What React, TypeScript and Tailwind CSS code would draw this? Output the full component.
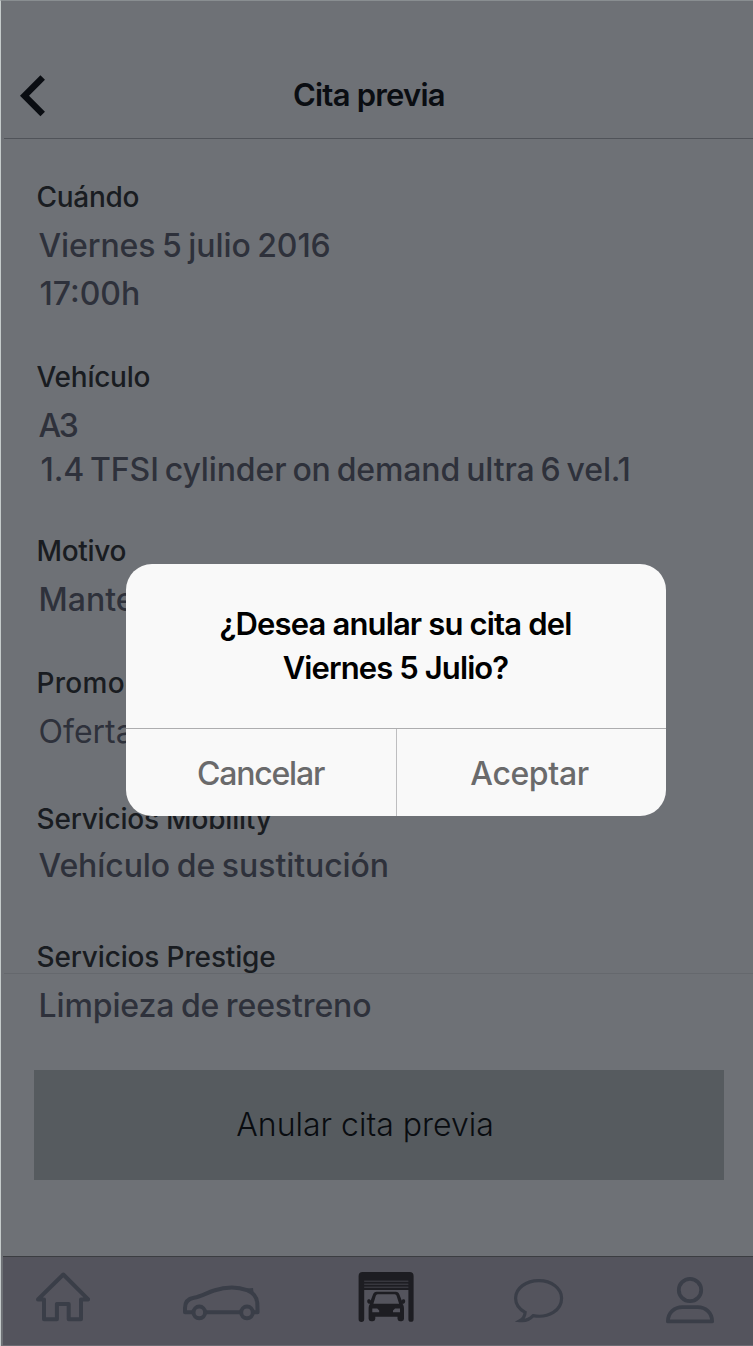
import type { ReactNode } from 'react';

type Line = { text: string; className: string };

type Section = {
  title: string;
  titleClass: string;
  className: string;
  lines: Line[];
};

const sections: Section[] = [
  {
    title: 'Cuándo',
    titleClass: 'tracking-[-0.3px]',
    className: 'h-[180px]',
    lines: [
      { text: 'Viernes 5 julio 2016', className: 'mt-[9px] pl-0.5 font-[450] tracking-[-0.1px] [word-spacing:-1.8px]' },
      { text: '17:00h', className: 'mt-1 pl-[3px] font-[450]' },
    ],
  },
  {
    title: 'Vehículo',
    titleClass: 'tracking-[-0.25px]',
    className: 'h-[174px]',
    lines: [
      { text: 'A3', className: 'mt-[9px] pl-0.5 font-[450] tracking-[-2.5px]' },
      {
        text: '1.4 TFSI cylinder on demand ultra 6 vel.1',
        className: 'pl-1 font-[450] tracking-[-0.13px] [word-spacing:-2.4px]',
      },
    ],
  },
  {
    title: 'Motivo',
    titleClass: 'tracking-[-0.3px]',
    className: 'h-[132px]',
    lines: [{ text: 'Mantenimiento', className: 'mt-[9px] pl-0.5 font-[450]' }],
  },
  {
    title: 'Promociones',
    titleClass: 'tracking-[0.3px]',
    className: 'h-[136px]',
    lines: [{ text: 'Oferta', className: 'mt-[9px] pl-0.5 font-[380]' }],
  },
  {
    title: 'Servicios Mobility',
    titleClass: 'tracking-[-0.2px]',
    className: 'h-[138px]',
    lines: [
      { text: 'Vehículo de sustitución', className: 'mt-[7px] pl-0.5 font-[450] tracking-[-0.07px] [word-spacing:-1.8px]' },
    ],
  },
  {
    title: 'Servicios Prestige',
    titleClass: 'tracking-[-0.15px]',
    className: 'h-[131px]',
    lines: [
      { text: 'Limpieza de reestreno', className: 'mt-[9px] pl-0.5 font-[450] tracking-[-0.12px] [word-spacing:-1.8px]' },
    ],
  },
];

function HomeIcon() {
  return (
    <svg width="54" height="52" viewBox="0 0 54 52" fill="none" stroke="#3a3e48" strokeWidth="4" strokeLinejoin="round">
      <path d="M8 47.2V27.4H2L27.3 2.5L52.2 27.4H45V47.2H32.7V32H20.9V47.2Z" />
    </svg>
  );
}

function CarIcon() {
  return (
    <svg width="78" height="52" viewBox="0 0 78 52" fill="none" stroke="#3a3e48" strokeWidth="4" strokeLinejoin="round">
      <path d="M10.5 40.3H3V36C3 30 6 26.6 12 25.7C20 24.6 25 20.5 32 18.5C42 15.4 55 14.5 65 18.2C70.5 20.3 75 25 75.3 31L75.6 40.3H72M24 40.3H58.5" />
      <path d="M65 16.4L71 16L71.4 19.5L69.5 21.5Z" fill="#3a3e48" stroke="none" />
      <circle cx="17.3" cy="40.4" r="5.8" />
      <circle cx="65" cy="40.4" r="5.8" />
    </svg>
  );
}

function GarageIcon() {
  return (
    <svg width="56" height="52" viewBox="0 0 56 52" fill="#1d1d22">
      <path d="M.6 4Q.6 0 4.6 0H51.6Q55.6 0 55.6 4V47.2A2.6 2.6 0 0 1 50.4 47.2V18H6.2V47.2A2.6 2.6 0 0 1 .6 47.2Z" />
      <path d="M6.2 9.2H50.4M6.2 12.2H50.4M6.2 15.2H50.4" stroke="#484850" strokeWidth=".9" />
      <path
        fillRule="evenodd"
        d="M18.6 19.8H37.8Q40.5 19.8 41.6 23L43.7 28.6C44.6 26.6 47.2 26.8 47.2 29.2C47.2 31.4 45.4 32 44.4 31.8C45.6 33 46 34.6 46 37V46.8A2.4 2.4 0 0 1 43.6 49.2H41.9A2.4 2.4 0 0 1 39.5 46.8V44.7H17.3V46.8A2.4 2.4 0 0 1 14.9 49.2H13A2.4 2.4 0 0 1 10.6 46.8V37C10.6 34.6 11 33 12.2 31.8C11 32 9.2 31.4 9.2 29.2C9.2 26.8 11.8 26.6 12.7 28.6L14.8 23Q15.9 19.8 18.6 19.8ZM19.6 22.2Q18.3 22.2 17.8 23.8L15.4 31.8H41.1L38.6 23.8Q38.1 22.2 36.8 22.2ZM14.3 36.5V40.2H21.2V38.6L19.2 36.5ZM37 36.5L35 38.6V40.2H42V36.5Z"
      />
    </svg>
  );
}

function ChatIcon() {
  return (
    <svg width="50" height="52" viewBox="0 0 50 52" fill="none" stroke="#3a3e48" strokeWidth="3.2" strokeLinejoin="miter">
      <path d="M19.2 43.7C35 46.4 47.6 38 47.6 26.2C47.6 16.2 37.6 8.6 24.9 8.6C12 8.6 1.6 16.2 1.6 26.2C1.6 32.3 5 37 11.1 40.3C11 43.8 9 47 6 48.6C11.5 49.2 15.8 47.4 19.2 43.7Z" />
    </svg>
  );
}

function PersonIcon() {
  return (
    <svg width="48" height="52" viewBox="0 0 48 52" fill="none" stroke="#3a3e48" strokeWidth="3.8" strokeLinejoin="round">
      <circle cx="24" cy="18" r="11.2" />
      <path d="M1.9 49.4C1.9 41 8 35.1 16.5 35.1H31.5C40 35.1 46.1 41 46.1 49.4Z" />
    </svg>
  );
}

function NavButton({ label, className, children }: { label: string; className: string; children: ReactNode }) {
  return (
    <button aria-label={label} className={className}>
      {children}
    </button>
  );
}

function ConfirmDialog() {
  return (
    <div
      role="dialog"
      className="absolute left-[124.5px] top-[563px] flex h-[252px] w-[540px] flex-col overflow-hidden rounded-[26px] bg-[#f9f9f9]"
    >
      <div className="h-[164px] pt-[38px] text-center text-[31px] font-semibold leading-[44px] text-black">
        <p className="tracking-[-0.85px]">¿Desea anular su cita del</p>
        <p className="tracking-[-0.9px]">Viernes 5 Julio?</p>
      </div>
      <div className="flex flex-1 border-t border-[#adadaf] text-[32px] leading-[44px] text-[#6a6a6b]">
        <button className="w-[271px] border-r border-[#bebec0] pt-[3px] font-[540] tracking-[-1.2px]">Cancelar</button>
        <button className="flex-1 pr-[3px] pt-[3px] font-[450] tracking-[-0.4px]">Aceptar</button>
      </div>
    </div>
  );
}

export default function App() {
  return (
    <div className="relative flex h-[1346px] w-[753px] flex-col overflow-hidden border-l border-t border-l-[#c5cbcb] border-t-[#898e91] bg-[#6e7176] font-['Inter',sans-serif]">
      <header className="ml-[3px] flex h-[138px] shrink-0 items-start border-b border-[#505359]">
        <button aria-label="Atrás" className="ml-4 mt-[74px]">
          <svg width="26" height="42" viewBox="0 0 26 42" fill="none" stroke="#0a0d12" strokeWidth="6.4">
            <path d="M22.7 2.5L4.5 20.7L22.7 38.9" />
          </svg>
        </button>
        <h1 className="ml-[247px] mt-[72px] text-[31px] font-semibold leading-[44px] tracking-[-0.8px] text-[#0a0d12]">
          Cita previa
        </h1>
      </header>

      <main className="flex-1 pl-[35.5px] pt-10">
        {sections.map((section) => (
          <section key={section.title} className={section.className}>
            <h2 className={`text-[28px] font-[480] leading-9 text-[#191c21] ${section.titleClass}`}>{section.title}</h2>
            {section.lines.map((line) => (
              <p key={line.text} className={`whitespace-nowrap text-[32px] leading-[44px] text-[#2e313b] ${line.className}`}>
                {line.text}
              </p>
            ))}
          </section>
        ))}
        <button className="-ml-[2.5px] h-[110px] w-[690px] bg-[#565b5f] pr-[28px] text-center text-[32px] font-[350] leading-[44px] text-[#090c10]">
          Anular cita previa
        </button>
      </main>

      <div className="absolute left-[3px] top-[972px] h-px w-[750px] bg-[#65686d]" />

      <nav className="ml-[2px] flex h-[90px] shrink-0 items-start border-b border-t border-b-[#6a6b72] border-t-[#3b3d41] bg-[#54545d] pt-[15px]">
        <NavButton label="Inicio" className="ml-[33px]">
          <HomeIcon />
        </NavButton>
        <NavButton label="Vehículos" className="ml-[92px]">
          <CarIcon />
        </NavButton>
        <NavButton label="Taller" className="ml-[98px]">
          <GarageIcon />
        </NavButton>
        <NavButton label="Mensajes" className="ml-[100px]">
          <ChatIcon />
        </NavButton>
        <NavButton label="Perfil" className="ml-[102px]">
          <PersonIcon />
        </NavButton>
      </nav>

      <ConfirmDialog />
    </div>
  );
}
